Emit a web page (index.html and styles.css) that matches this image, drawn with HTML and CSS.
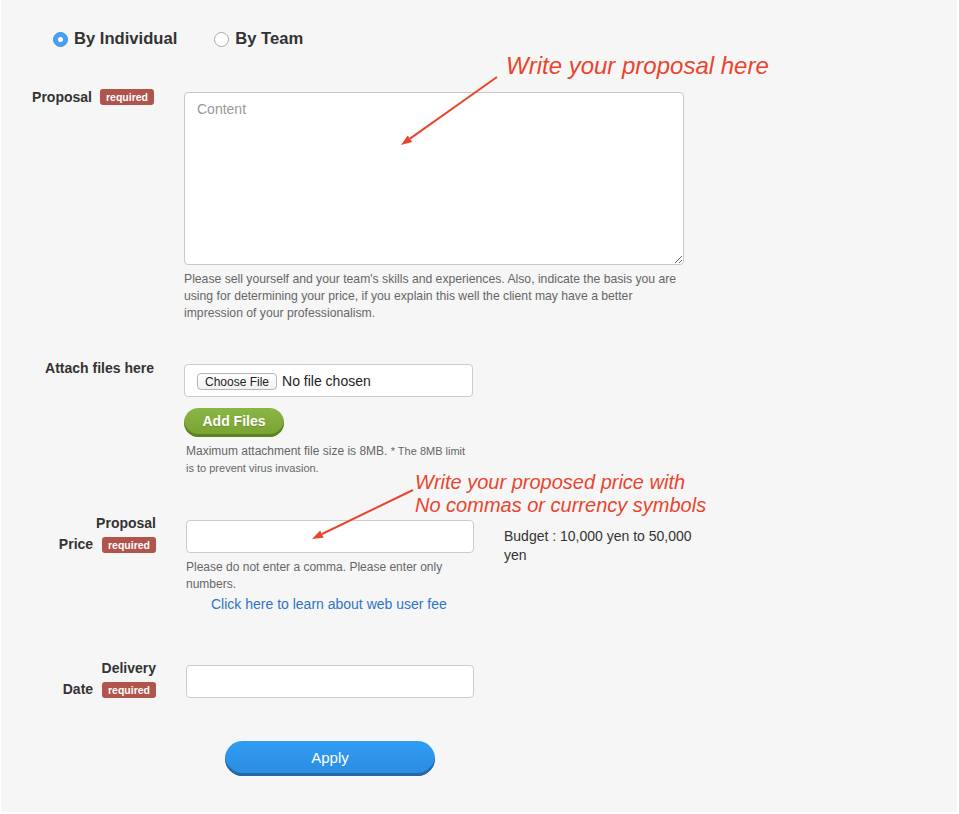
FILE: index.html
```html
<!DOCTYPE html>
<html lang="en">
<head>
<meta charset="utf-8">
<title>Proposal form</title>
<link rel="stylesheet" href="styles.css">
</head>
<body>
<div class="page">
  <div class="radios">
    <label class="radio"><span class="dot dot-on"></span><span>By Individual</span></label>
    <label class="radio"><span class="dot"></span><span>By Team</span></label>
  </div>

  <div class="row row-proposal">
    <div class="label label-a"><span>Proposal</span><span class="badge">required</span></div>
    <div class="field">
      <textarea class="textarea" placeholder="Content"></textarea>
      <p class="help help-wide">Please sell yourself and your team's skills and experiences. Also, indicate the basis you are<br>using for determining your price, if you explain this well the client may have a better<br>impression of your professionalism.</p>
    </div>
  </div>

  <div class="row row-attach">
    <div class="label label-b">Attach files here</div>
    <div class="field">
      <div class="filebox"><span class="choose">Choose File</span><span class="nofile">No file chosen</span></div>
      <button class="btn-add" type="button">Add Files</button>
      <p class="note">Maximum attachment file size is 8MB. <small>* The 8MB limit<br>is to prevent virus invasion.</small></p>
    </div>
  </div>

  <div class="row row-price">
    <div class="label label-c">Proposal<br>Price <span class="badge">required</span></div>
    <div class="field field-c">
      <input class="input" type="text">
      <p class="help">Please do not enter a comma. Please enter only<br>numbers.</p>
      <a class="feelink" href="#">Click here to learn about web user fee</a>
    </div>
    <div class="budget">Budget : 10,000 yen to 50,000 yen</div>
  </div>

  <div class="row row-date">
    <div class="label label-c">Delivery<br>Date <span class="badge">required</span></div>
    <div class="field field-c">
      <input class="input" type="text">
    </div>
  </div>

  <button class="btn-apply" type="button">Apply</button>

  <div class="note-red note-1">Write your proposal here</div>
  <div class="note-red note-2">Write your proposed price with<br>No commas or currency symbols</div>
  <svg class="arrows" width="959" height="814" viewBox="0 0 959 814">
    <line x1="497" y1="77" x2="410" y2="138.6" stroke="#e9452e" stroke-width="2"/>
    <polygon points="401,145 412.3,141.9 407.7,135.4" fill="#e9452e"/>
    <line x1="413" y1="490" x2="322" y2="534" stroke="#e9452e" stroke-width="2"/>
    <polygon points="312,539 323.6,537.8 320.2,530.6" fill="#e9452e"/>
  </svg>
</div>
</body>
</html>
```

FILE: styles.css
```css
* { box-sizing: border-box; }
html, body { margin: 0; padding: 0; }
body {
  background: #ffffff;
  font-family: "Liberation Sans", Arial, sans-serif;
  color: #333;
}
.page {
  position: relative;
  background: #f6f6f6;
  margin: 0 2px 0 1px;
  height: 812px;
  padding-top: 29px;
}
.radios {
  display: flex;
  align-items: center;
  margin-left: 52px;
  height: 20px;
  gap: 37px;
}
.radio {
  display: flex;
  align-items: center;
  gap: 6px;
  font-size: 16.6px;
  font-weight: bold;
  color: #333;
  line-height: 20px;
}
.dot {
  width: 15px;
  height: 15px;
  border-radius: 50%;
  background: #fff;
  border: 1px solid #a9a9a9;
  display: inline-block;
  position: relative;
}
.dot-on {
  background: #4a9ff2;
  border-color: #3f93e8;
}
.dot-on::after {
  content: "";
  position: absolute;
  left: 4px;
  top: 4px;
  width: 5px;
  height: 5px;
  border-radius: 50%;
  background: #fff;
}
.row {
  display: flex;
  align-items: flex-start;
}
.row-proposal { margin-top: 43px; }
.row-attach { margin-top: 42px; }
.row-price { margin-top: 43px; }
.row-date { margin-top: 51px; }
.label {
  font-size: 14px;
  font-weight: bold;
  color: #333;
  text-align: right;
  flex: none;
}
.label-a {
  width: 153px;
  display: flex;
  justify-content: flex-end;
  align-items: center;
  gap: 8px;
  line-height: 20px;
  margin-top: -5px;
}
.label-b {
  width: 153px;
  line-height: 20px;
  margin-top: -6px;
}
.row-proposal .field,
.row-attach .field { margin-left: 30px; }
.label-c {
  width: 155px;
  line-height: 21px;
  margin-top: -7px;
}
.field-c { margin-left: 30px; width: 288px; flex: none; }
.badge {
  display: inline-block;
  background: #b0544c;
  color: #fff;
  font-size: 10.5px;
  font-weight: bold;
  line-height: 16px;
  height: 16px;
  padding: 0 6px;
  border-radius: 3px;
  vertical-align: middle;
}
.label-c .badge { margin-left: 5px; }
.textarea {
  display: block;
  width: 500px;
  height: 173px;
  border: 1px solid #c8c8c8;
  border-radius: 4px;
  background: #fff;
  padding: 6px 12px;
  font-family: "Liberation Sans", Arial, sans-serif;
  font-size: 14px;
  line-height: 20px;
  color: #333;
  margin: 0;
}
.textarea::placeholder { color: #999; }
.help {
  margin: 6px 0 0;
  font-size: 12px;
  line-height: 17px;
  color: #666;
}
.help-wide { white-space: nowrap; font-size: 12.2px; }
.filebox {
  width: 289px;
  height: 33px;
  border: 1px solid #cccccc;
  border-radius: 4px;
  background: #fff;
  display: flex;
  align-items: center;
  padding-left: 12px;
  gap: 5px;
  padding-top: 0;
}
.choose {
  display: inline-block;
  font-size: 12px;
  line-height: 14px;
  height: 17px;
  padding: 1px 7px 0;
  border: 1px solid #b5b5b5;
  border-radius: 4px;
  background: linear-gradient(#ffffff, #f1f1f1);
  color: #222;
  margin-top: 2px;
}
.nofile {
  font-size: 14px;
  color: #222;
  line-height: 16px;
}
.btn-add {
  display: block;
  margin-top: 11px;
  width: 100px;
  height: 29px;
  border: none;
  border-radius: 15px;
  background: linear-gradient(#8bb545, #77a232);
  box-shadow: inset 0 -3px 0 #5d8123;
  color: #fff;
  font-family: "Liberation Sans", Arial, sans-serif;
  font-size: 14px;
  font-weight: bold;
  padding: 0 0 3px;
  text-shadow: 0 1px 1px rgba(0,0,0,0.15);
  cursor: pointer;
}
.note {
  margin: 6px 0 0 2px;
  font-size: 12px;
  line-height: 17px;
  color: #666;
  white-space: nowrap;
}
.note small { font-size: 11px; }
.input {
  display: block;
  width: 288px;
  height: 33px;
  border: 1px solid #cccccc;
  border-radius: 4px;
  background: #fff;
  margin: 0;
  padding: 0 10px;
  font-size: 14px;
}
.budget {
  width: 200px;
  margin-left: 30px;
  margin-top: 7px;
  font-size: 14px;
  line-height: 19px;
  color: #333;
}
.row-price .help {
  margin-top: 6px;
  white-space: nowrap;
}
.feelink {
  display: block;
  margin-left: 25px;
  font-size: 14px;
  line-height: 20px;
  color: #2f74c4;
  text-decoration: none;
  margin-top: 1px;
  white-space: nowrap;
}
.btn-apply {
  display: block;
  margin: 41px 0 0 224px;
  width: 210px;
  height: 35px;
  border: none;
  border-radius: 18px;
  background: linear-gradient(#319cf3, #2a8ce0);
  box-shadow: inset 0 -3px 0 #2466a6;
  color: #fff;
  font-family: "Liberation Sans", Arial, sans-serif;
  font-size: 15px;
  padding: 0 0 3px;
  cursor: pointer;
}
.note-red {
  position: absolute;
  color: #e9452e;
  font-style: italic;
  white-space: nowrap;
}
.note-1 {
  left: 505px;
  top: 52px;
  font-size: 24px;
  line-height: 27px;
}
.note-2 {
  left: 414px;
  top: 471px;
  font-size: 20px;
  line-height: 23px;
}
.arrows {
  position: absolute;
  left: -1px;
  top: 0;
  pointer-events: none;
}
```
